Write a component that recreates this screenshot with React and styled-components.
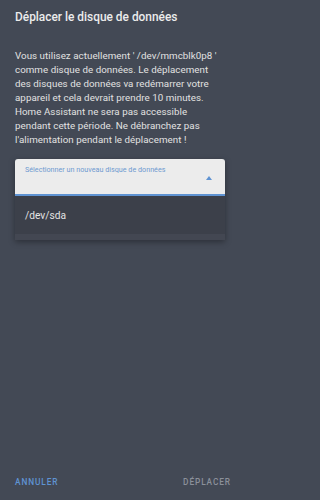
import React from "react";
import styled, { createGlobalStyle } from "styled-components";

const Global = createGlobalStyle`
  html, body { margin: 0; padding: 0; background: #434955; }
  body { font-family: Roboto, "Noto Sans", sans-serif; }
`;

const Dialog = styled.div`
  width: 241px;
  height: 500px;
  background: #434955;
  display: flex;
  flex-direction: column;
  box-sizing: border-box;
`;

const Content = styled.div`
  padding: 0 16px 0 15px;
  display: flex;
  flex-direction: column;
`;

const Title = styled.h2`
  margin: 0;
  padding-top: 9px;
  font-size: 11.9px;
  font-weight: 500;
  line-height: 16px;
  color: #ececec;
`;

const Body = styled.p`
  margin: 24px 0 0;
  font-size: 9.75px;
  line-height: 14px;
  color: #e2e2e2;
  letter-spacing: 0.05px;
`;

const SelectWrap = styled.div`
  margin-top: 12px;
  display: flex;
  flex-direction: column;
  box-shadow: 0 2px 6px rgba(0, 0, 0, 0.35);
`;

const Field = styled.div`
  height: 29px;
  background: #ececec;
  border-radius: 3px 3px 0 0;
  border-bottom: 2px solid #5f93d2;
  position: relative;
  display: flex;
  align-items: flex-start;
  padding: 6px 10px 0;
  box-sizing: content-box;
`;

const FieldLabel = styled.span`
  font-size: 7.2px;
  color: #6f9ad0;
  line-height: 10px;
`;

const Arrow = styled.svg`
  position: absolute;
  right: 13px;
  top: 17px;
`;

const Menu = styled.div`
  background: #434752;
  padding-bottom: 6px;
`;

const MenuItem = styled.div`
  height: 38px;
  background: #3c404a;
  display: flex;
  align-items: center;
  padding: 0 10px;
  font-size: 10.2px;
  color: #e4e4e4;
`;

const Spacer = styled.div`
  flex: 1;
`;

const Actions = styled.div`
  display: flex;
  justify-content: space-between;
  align-items: center;
  padding: 0 10px 13px 15px;
`;

const ActionButton = styled.button`
  background: none;
  border: none;
  padding: 0;
  font-family: Roboto, sans-serif;
  font-size: 8.3px;
  font-weight: 500;
  letter-spacing: 0.9px;
  text-transform: uppercase;
  color: ${(p) => (p.$primary ? "#5f93d2" : "#8b909a")};
`;

export default function App() {
  return (
    <>
      <Global />
      <Dialog>
        <Content>
          <Title>Déplacer le disque de données</Title>
          <Body>
            Vous utilisez actuellement ' /dev/mmcblk0p8 ' comme disque de
            données. Le déplacement des disques de données va redémarrer votre
            appareil et cela devrait prendre 10 minutes. Home Assistant ne sera
            pas accessible pendant cette période. Ne débranchez pas
            l'alimentation pendant le déplacement !
          </Body>
          <SelectWrap>
            <Field>
              <FieldLabel>Sélectionner un nouveau disque de données</FieldLabel>
              <Arrow width="6" height="4" viewBox="0 0 6 4">
                <path d="M0 4 L3 0 L6 4 Z" fill="#5f93d2" />
              </Arrow>
            </Field>
            <Menu>
              <MenuItem>/dev/sda</MenuItem>
            </Menu>
          </SelectWrap>
        </Content>
        <Spacer />
        <Actions>
          <ActionButton $primary>Annuler</ActionButton>
          <ActionButton>Déplacer</ActionButton>
        </Actions>
      </Dialog>
    </>
  );
}
